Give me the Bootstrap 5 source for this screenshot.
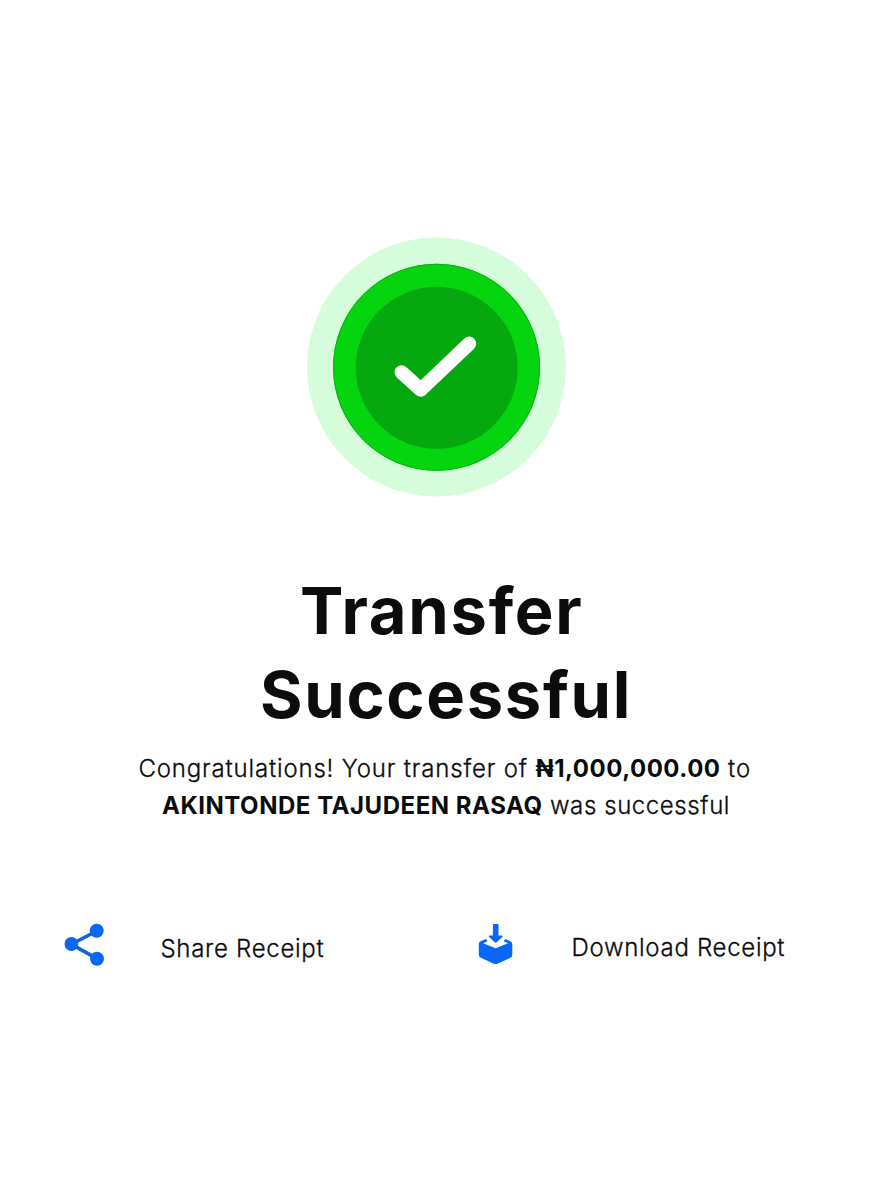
<!DOCTYPE html>
<html lang="en">
<head>
<meta charset="utf-8">
<meta name="viewport" content="width=device-width, initial-scale=1">
<title>Transfer Successful</title>
<link href="https://cdn.jsdelivr.net/npm/bootstrap@5.3.0/dist/css/bootstrap.min.css" rel="stylesheet">
<style>
body{font-family:Inter,"Liberation Sans",sans-serif;color:#0b0c0d;min-height:1199px}
.receipt{width:879px;padding-top:237px}
.status-icon{margin-left:306px;width:261px;height:260px}
.headline{margin:72px 0 0;font-size:65px;line-height:84px;font-weight:700}
.h-one{letter-spacing:1.75px;margin-left:300px}
.h-two{letter-spacing:1.7px;margin-left:260px}
.message{margin:14px 0 0;font-size:24px;line-height:36.5px;font-weight:300;-webkit-text-stroke:.3px currentColor}
.message strong{font-weight:700;letter-spacing:.5px;-webkit-text-stroke:0}
.m-one{margin-left:138.5px;letter-spacing:.83px}
.m-two{margin-left:162px;letter-spacing:.58px}
.m-two strong{letter-spacing:.53px}
.actions{margin-top:99px;padding-left:64px}
.action{flex:none;width:414px;color:inherit;font-size:24px;line-height:30px;font-weight:300;letter-spacing:.7px;-webkit-text-stroke:.3px currentColor}
.action:hover{color:inherit}
.action svg{flex:none}
.share-label{margin-left:54.5px;padding-top:11px}
.down-label{margin-left:57.5px;padding-top:10px}
</style>
</head>
<body class="bg-white">
<main class="receipt text-nowrap">
  <svg class="status-icon d-block" viewBox="306 237 261 260" aria-hidden="true">
    <circle cx="436.5" cy="367" r="129.5" fill="#d6fddb"/>
    <circle cx="436.5" cy="367.3" r="103.5" fill="#04d50e"/>
    <circle cx="436.5" cy="367.3" r="103" fill="none" stroke="#0bb012"/>
    <circle cx="436.7" cy="367.8" r="81" fill="#05a80f"/>
    <path d="M401.5 372.2 420.8 389.7 469.2 343.6" fill="none" stroke="#fff" stroke-width="14" stroke-linecap="round" stroke-linejoin="round"/>
  </svg>
  <h1 class="headline"><span class="d-block h-one">Transfer</span><span class="d-block h-two">Successful</span></h1>
  <p class="message"><span class="d-block m-one">Congratulations! Your transfer of <strong>₦1,000,000.00</strong> to</span><span class="d-block m-two"><strong>AKINTONDE TAJUDEEN RASAQ</strong> was successful</span></p>
  <div class="actions d-flex">
    <a class="action d-flex align-items-start text-decoration-none" href="#">
      <svg width="42" height="44" viewBox="64 923 42 44" aria-hidden="true" fill="#0768f5"><path d="M96.7 931 71.4 944.2 97 958.6" fill="none" stroke="#0d62d8" stroke-width="3.6"/><circle cx="96.7" cy="930.8" r="7"/><circle cx="71.4" cy="944" r="6.9"/><circle cx="97" cy="958.7" r="7"/></svg>
      <span class="share-label">Share Receipt</span>
    </a>
    <a class="action d-flex align-items-start text-decoration-none" href="#">
      <svg width="36" height="44" viewBox="478 923 36 44" aria-hidden="true" fill="#0768f5"><path d="M492.9 925q0-1 1-1h3.6q1 0 1 1v10.5h3.4q1.4.2.4 1.4l-5.6 5.4q-1 .8-2 0l-5.6-5.4q-1-1.2.4-1.4h3.4z"/><path d="M486 939 487.6 941.3 483.2 943.2 495.6 948.3 508 943.2 503.6 941.3 505.2 939 510 941Q512.3 941.9 512.3 944.2V954.4Q512.3 956.8 510.2 957.8L498 963.4Q495.6 964.5 493.2 963.4L481 957.8Q478.8 956.8 478.8 954.4V944.2Q478.8 941.9 481 941Z"/></svg>
      <span class="down-label">Download Receipt</span>
    </a>
  </div>
</main>
<script src="https://cdn.jsdelivr.net/npm/bootstrap@5.3.0/dist/js/bootstrap.bundle.min.js"></script>
</body>
</html>
